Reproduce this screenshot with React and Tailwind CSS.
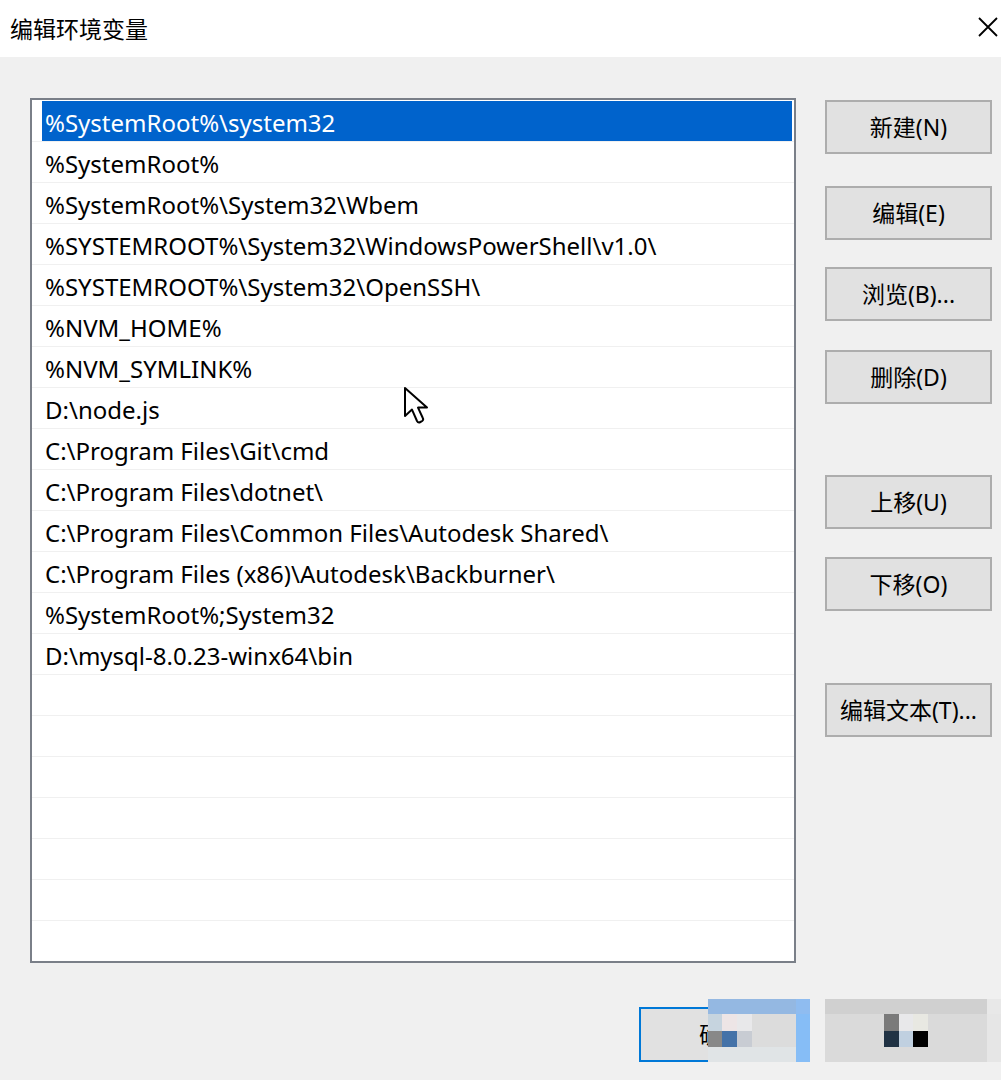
import React from 'react';

const font = { fontFamily: '"Noto Sans", "Noto Sans CJK SC", sans-serif' };

const paths = [
  '%SystemRoot%\\system32',
  '%SystemRoot%',
  '%SystemRoot%\\System32\\Wbem',
  '%SYSTEMROOT%\\System32\\WindowsPowerShell\\v1.0\\',
  '%SYSTEMROOT%\\System32\\OpenSSH\\',
  '%NVM_HOME%',
  '%NVM_SYMLINK%',
  'D:\\node.js',
  'C:\\Program Files\\Git\\cmd',
  'C:\\Program Files\\dotnet\\',
  'C:\\Program Files\\Common Files\\Autodesk Shared\\',
  'C:\\Program Files (x86)\\Autodesk\\Backburner\\',
  '%SystemRoot%;System32',
  'D:\\mysql-8.0.23-winx64\\bin',
];

// buttons on the right, with the gap above each one
const buttons = [
  { label: '新建(N)', gap: 'mt-[2px]' },
  { label: '编辑(E)', gap: 'mt-[32px]' },
  { label: '浏览(B)...', gap: 'mt-[27px]' },
  { label: '删除(D)', gap: 'mt-[29px]' },
  { label: '上移(U)', gap: 'mt-[71px]' },
  { label: '下移(O)', gap: 'mt-[28px]' },
  { label: '编辑文本(T)...', gap: 'mt-[72px]' },
];

const Button = ({ label, className = '' }) => (
  <div
    className={`w-[167px] h-[54px] flex items-center justify-center bg-[#e1e1e1] border-2 border-[#adadad] text-[23px] leading-none text-black ${className}`}
  >
    {label}
  </div>
);

const Row = ({ text, selected }) => (
  <div className="h-[41px] border-b border-[#f0f0f0] flex items-stretch">
    {selected ? (
      <div className="ml-[10px] mr-[2px] flex-1 bg-[#0063cc] text-white flex items-center pl-[3px] pt-[3px]">{text}</div>
    ) : (
      <div className="flex items-center pl-[13px] pt-[3px] text-black">{text}</div>
    )}
  </div>
);

// pixelated blocks covering the OK / Cancel buttons
const Mosaic = ({ cells, className }) => (
  <div className={`absolute grid ${className}`}>
    {cells.map((c, i) => (
      <div key={i} style={{ background: c }} />
    ))}
  </div>
);

const Cursor = () => (
  <svg className="absolute left-[403px] top-[386px]" width="28" height="40" viewBox="0 0 14 20">
    <path d="M1 1 L1 15 L4.5 11.8 L7 17.5 Q7.6 18.6 8.7 18 L9.6 17.5 Q10.4 16.9 9.9 16 L7.5 10.8 L12 10.8 Z" fill="white" stroke="black" strokeWidth="1" strokeLinejoin="round" />
  </svg>
);

export default function App() {
  const empty = Array.from({ length: 7 });
  return (
    <div className="relative w-[1001px] h-[1080px] bg-[#f0f0f0] overflow-hidden" style={font}>
      <div className="h-[57px] bg-white flex items-center justify-between pl-[10px] pr-[2px]">
        <span className="text-[23px] text-black" style={{ fontFamily: '"Noto Sans CJK SC", sans-serif' }}>编辑环境变量</span>
        <svg width="22" height="22" viewBox="0 0 22 22" className="mb-[4px]">
          <path d="M2 2 L20 20 M20 2 L2 20" stroke="black" strokeWidth="1.8" />
        </svg>
      </div>

      <div className="flex pt-[41px]">
        <div className="ml-[30px] w-[766px] h-[865px] bg-white border-2 border-[#7a7f88] pt-[1px] text-[24px] leading-none overflow-hidden">
          {paths.map((p, i) => (
            <Row key={i} text={p} selected={i === 0} />
          ))}
          {empty.map((_, i) => (
            <Row key={`e${i}`} text="" />
          ))}
        </div>

        <div className="ml-[29px] flex flex-col">
          {buttons.map((b) => (
            <Button key={b.label} label={b.label} className={b.gap} />
          ))}
        </div>
      </div>

      <div className="absolute left-[639px] top-[1007px] w-[170px] h-[55px] bg-[#e1e1e1] border-2 border-[#0078d7] flex items-center pl-[58px] text-[23px] text-black">
        确定
      </div>
      <Mosaic
        className="left-[708px] top-[999px] w-[102px] h-[63px] grid-cols-[14px_15px_15px_44px_14px] grid-rows-[15px_17px_16px_15px]"
        cells={[
          '#94b8e2', '#94b8e2', '#94b8e2', '#94b8e2', '#8fbcf0',
          '#c6d4df', '#ede5e6', '#e8e8ea', '#dcdcdc', '#86bdf6',
          '#888888', '#4472a8', '#c8ccd3', '#dcdcdc', '#86bdf6',
          '#e0e4e6', '#e0e4e6', '#e0e4e6', '#e0e4e6', '#86bdf6',
        ]}
      />

      <Mosaic
        className="left-[825px] top-[999px] w-[176px] h-[63px] grid-cols-[59px_15px_14px_15px_59px_14px] grid-rows-[15px_17px_16px_15px]"
        cells={[
          '#d0d0d0', '#d0d0d0', '#d0d0d0', '#d0d0d0', '#d0d0d0', '#e8e8e8',
          '#dadada', '#7a7a7a', '#e8e8ea', '#e8e8e2', '#dadada', '#e6e6e6',
          '#dadada', '#203244', '#c0d0e0', '#000000', '#dadada', '#e6e6e6',
          '#dadada', '#dadada', '#dadada', '#dadada', '#dadada', '#e6e6e6',
        ]}
      />

      <Cursor />
    </div>
  );
}
